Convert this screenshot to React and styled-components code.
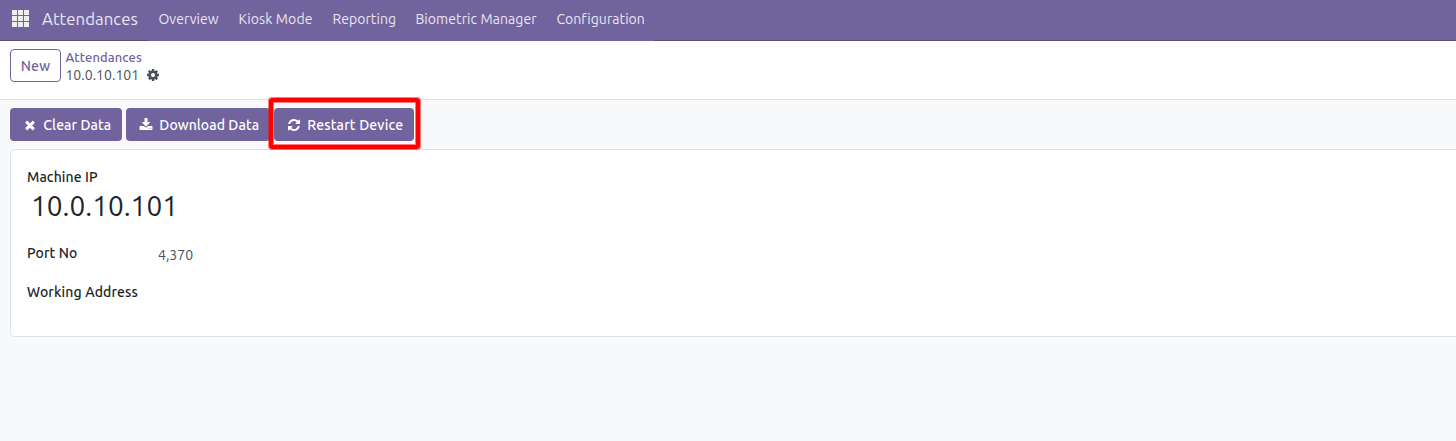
import React from 'react';
import styled, { createGlobalStyle } from 'styled-components';

const GlobalStyle = createGlobalStyle`
  *, *::before, *::after { box-sizing: border-box; }
  body {
    margin: 0;
    background: #f8f9fa;
    color: #212529;
    font-family: Ubuntu, "Noto Sans", sans-serif;
    font-size: 14px;
    line-height: 21px;
    overflow: hidden;
  }
`;

const Screen = styled.div`
  display: flex;
  flex-direction: column;
  height: 441px;
  overflow: hidden;
`;

const Label = styled.span`
  white-space: nowrap;
  letter-spacing: ${(p) => p.$spacing || 0}px;
`;

const Navbar = styled.nav`
  display: flex;
  align-items: flex-start;
  flex: none;
  height: 41px;
  background: linear-gradient(#5a4f7f, #5a4f7f) bottom / 100% 1px no-repeat #71639e;
  color: #e9e6f0;
`;

const AppsButton = styled.div`
  width: 42px;
  padding: 10px 0 0 12px;
  line-height: 0;
`;

const Brand = styled.div`
  width: 106px;
  padding-top: 7px;
  font-size: 16.8px;
  line-height: 23px;
`;

const Menu = styled.div`
  display: flex;
  height: 41px;
  background: #71639e;
`;

const MenuItem = styled.div`
  width: ${(p) => p.$width}px;
  padding: 9px 0 0 10.4px;
`;

const ControlPanel = styled.header`
  display: flex;
  flex: none;
  height: 59px;
  padding: 8px 10px 0;
  gap: 4.4px;
  background: #fff;
  border-bottom: 1px solid #dee2e6;
`;

const NewButton = styled.button`
  width: 51px;
  height: 33px;
  padding: 1px 0 0;
  border: 1px solid #71639e;
  border-radius: 4px;
  background: #fff;
  color: #71639e;
  font: inherit;
  font-weight: 500;
  line-height: 30px;
`;

const Breadcrumb = styled.div`
  display: flex;
  flex-direction: column;
`;

const Parent = styled.div`
  color: #71639e;
  font-size: 13px;
  font-weight: 500;
  line-height: 17px;
`;

const Current = styled.div`
  display: flex;
  align-items: center;
  gap: 6.5px;
  height: 18px;
  color: #495057;
  line-height: 18px;
`;

const StatusBar = styled.div`
  display: flex;
  flex: none;
  gap: 4px;
  height: 49px;
  padding: 8px 10px 0;
`;

const ActionButton = styled.button`
  position: relative;
  display: flex;
  align-items: center;
  gap: 6.3px;
  width: ${(p) => p.$width}px;
  height: 33px;
  padding: 1px 0 0 13px;
  border: 0;
  border-radius: 4px;
  background: #71639e;
  color: #fff;
  font: inherit;
  font-weight: 500;
`;

const Highlight = styled.span`
  position: absolute;
  inset: -10px -6px -8px -5px;
  border: 4px solid #ff0000;
  border-radius: 3px;
  box-shadow: 0 0 0 1px rgba(255, 0, 0, 0.5), inset 0 0 0 1px rgba(255, 0, 0, 0.5);
`;

const Glyph = styled.svg`
  flex: none;
  width: 14px;
  height: 14px;
  fill: currentColor;
`;

const Sheet = styled.main`
  flex: none;
  width: 1500px;
  height: 188px;
  margin-left: 10px;
  padding: 17px 16px 16px;
  border: 1px solid #dee2e6;
  border-radius: 4px;
  background: #fff;
`;

const FieldName = styled.div`
  width: ${(p) => p.$width || 131}px;
  color: #212529;
  font-weight: 500;
`;

const Title = styled.div`
  padding: 0 4px;
  font-size: 28px;
  line-height: 35px;
`;

const Row = styled.div`
  display: flex;
  height: 39px;
  margin-top: ${(p) => (p.$first ? 20 : 0)}px;
`;

const Value = styled.div`
  padding-top: 2px;
  color: #495057;
`;

const paths = {
  times:
    'M1490 1322q0 40-28 68l-136 136q-28 28-68 28t-68-28l-294-294-294 294q-28 28-68 28t-68-28l-136-136q-28-28-28-68t28-68l294-294-294-294q-28-28-28-68t28-68l136-136q28-28 68-28t68 28l294 294 294-294q28-28 68-28t68 28l136 136q28 28 28 68t-28 68l-294 294 294 294q28 28 28 68z',
  download:
    'M1344 1344q0-26-19-45t-45-19-45 19-19 45 19 45 45 19 45-19 19-45zm256 0q0-26-19-45t-45-19-45 19-19 45 19 45 45 19 45-19 19-45zm128-224v320q0 40-28 68t-68 28h-1472q-40 0-68-28t-28-68v-320q0-40 28-68t68-28h465l135 136q58 56 136 56t136-56l136-136h464q40 0 68 28t28 68zm-325-569q17 41-14 70l-448 448q-18 19-45 19t-45-19l-448-448q-31-29-14-70 17-39 59-39h256v-448q0-26 19-45t45-19h256q26 0 45 19t19 45v448h256q42 0 59 39z',
  refresh:
    'M1639 1056q0 5-1 7-64 268-268 434.5t-478 166.5q-146 0-282.5-55t-243.5-157l-129 129q-19 19-45 19t-45-19-19-45v-448q0-26 19-45t45-19h448q26 0 45 19t19 45-19 45l-137 137q71 66 161 102t187 36q134 0 250-65t186-179q11-17 53-117 8-23 30-23h192q13 0 22.5 9.5t9.5 22.5zm25-800v448q0 26-19 45t-45 19h-448q-26 0-45-19t-19-45 19-45l138-138q-148-137-349-137-134 0-250 65t-186 179q-11 17-53 117-8 23-30 23h-199q-13 0-22.5-9.5t-9.5-22.5v-7q65-268 270-434.5t480-166.5q146 0 284 55.5t245 156.5l130-129q19-19 45-19t45 19 19 45z',
  cog:
    'M1152 896q0-106-75-181t-181-75-181 75-75 181 75 181 181 75 181-75 75-181zm512-109v222q0 12-8 23t-20 13l-185 28q-19 54-39 91 35 50 107 138 10 12 10 25t-9 23q-27 37-99 108t-94 71q-12 0-26-9l-138-108q-44 23-91 38-16 136-29 186-7 28-36 28h-222q-14 0-24.5-8.5t-11.5-21.5l-28-184q-49-16-90-37l-141 107q-10 9-25 9-14 0-25-11-126-114-165-168-7-10-7-23 0-12 8-23 15-21 51-66.5t54-70.5q-27-50-41-99l-183-27q-13-2-21-12.5t-8-23.5v-222q0-12 8-23t19-13l186-28q14-46 39-92-40-57-107-138-10-12-10-24 0-10 9-23 26-36 98.5-107.5t94.5-71.5q13 0 26 10l138 107q44-23 91-38 16-136 29-186 7-28 36-28h222q14 0 24.5 8.5t11.5 21.5l28 184q49 16 90 37l142-107q9-9 24-9 13 0 25 10 129 119 165 170 7 8 7 22 0 12-8 23-15 21-51 66.5t-54 70.5q26 50 41 98l183 28q13 2 21 12.5t8 23.5z',
};

const Icon = ({ name }) => (
  <Glyph viewBox="0 0 1792 1792" aria-hidden="true">
    <path d={paths[name]} />
  </Glyph>
);

const AppsIcon = () => (
  <svg width="18" height="17" viewBox="0 0 18 17" fill="#f0eef5" aria-hidden="true">
    {[0, 6, 12].map((y) =>
      [0, 6, 12].map((x) => <rect key={`${x}-${y}`} x={x} y={y} width="5" height="5" />)
    )}
  </svg>
);

const menu = [
  { text: 'Overview', width: 80, spacing: 0.07 },
  { text: 'Kiosk Mode', width: 94, spacing: 0.11 },
  { text: 'Reporting', width: 83, spacing: 0.07 },
  { text: 'Biometric Manager', width: 141, spacing: 0.08 },
  { text: 'Configuration', width: 108, spacing: 0.07 },
];

export default function App() {
  return (
    <Screen>
      <GlobalStyle />
      <Navbar>
        <AppsButton><AppsIcon /></AppsButton>
        <Brand><Label $spacing={0.05}>Attendances</Label></Brand>
        <Menu>
          {menu.map((m) => (
            <MenuItem key={m.text} $width={m.width}>
              <Label $spacing={m.spacing}>{m.text}</Label>
            </MenuItem>
          ))}
        </Menu>
      </Navbar>
      <ControlPanel>
        <NewButton><Label $spacing={0.15}>New</Label></NewButton>
        <Breadcrumb>
          <Parent><Label $spacing={0.1}>Attendances</Label></Parent>
          <Current><Label $spacing={0.03}>10.0.10.101</Label><Icon name="cog" /></Current>
        </Breadcrumb>
      </ControlPanel>
      <StatusBar>
        <ActionButton $width={112}><Icon name="times" /><Label $spacing={0.09}>Clear Data</Label></ActionButton>
        <ActionButton $width={144}><Icon name="download" /><Label $spacing={0.08}>Download Data</Label></ActionButton>
        <ActionButton $width={140}>
          <Icon name="refresh" /><Label $spacing={0.17}>Restart Device</Label>
          <Highlight />
        </ActionButton>
      </StatusBar>
      <Sheet>
        <FieldName><Label $spacing={0.1}>Machine IP</Label></FieldName>
        <Title><Label>10.0.10.101</Label></Title>
        <Row $first>
          <FieldName><Label $spacing={0.12}>Port No</Label></FieldName>
          <Value><Label>4,370</Label></Value>
        </Row>
        <Row>
          <FieldName><Label $spacing={0.14}>Working Address</Label></FieldName>
        </Row>
      </Sheet>
    </Screen>
  );
}
